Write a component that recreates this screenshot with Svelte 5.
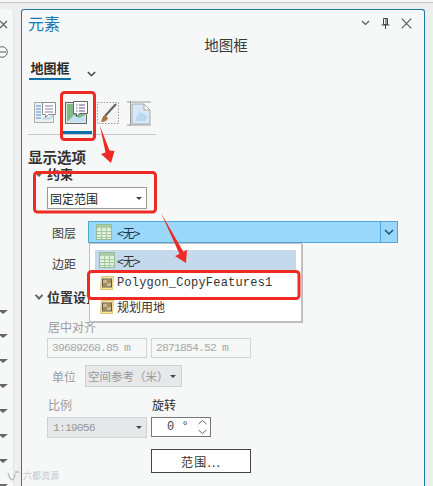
<script>
  const railMarks = [310, 334, 359, 384, 409, 434, 459, 484];
</script>

{#snippet tableIcon()}
  <svg class="ico16" viewBox="0 0 16 16" aria-hidden="true">
    <rect x="0.5" y="0.5" width="15" height="15" fill="#e4f0dc" stroke="#93bd93"/>
    <rect x="1" y="1" width="14" height="3" fill="#a9cfa6"/>
    <path d="M1 7.5h14M1 10.5h14M1 13.5h14M5.5 1v14M10.5 1v14" stroke="#a5c9a2" fill="none"/>
  </svg>
{/snippet}

{#snippet layerIcon()}
  <svg class="ico16" viewBox="0 0 16 16" aria-hidden="true">
    <path d="M2.5 1.5h12l-1 13h-12z" fill="#f7e6a4" stroke="#e0c668"/>
    <rect x="3.5" y="4" width="9" height="8" fill="#c9b98e" stroke="#5c5c50"/>
    <path d="M4 8h4V4.500h4V8H8v3.500H4z" fill="#a8895c"/>
  </svg>
{/snippet}

<div class="page">
  <div class="topline"></div>
  <div class="body">
    <aside class="rail">
      <svg class="rail-close" viewBox="0 0 10 10" aria-hidden="true">
        <path d="M1 1l7 7M8 1l-7 7" stroke="#555" stroke-width="1.1" fill="none"/>
      </svg>
      <svg class="rail-minus" viewBox="0 0 12 12" aria-hidden="true">
        <circle cx="5" cy="6" r="5.3" stroke="#666" fill="none"/>
        <path d="M1 6h8" stroke="#555" fill="none"/>
      </svg>
    </aside>

    <section class="panel">
      <header class="head">
        <h1>元素</h1>
        <div class="win-actions">
          <svg width="9" height="6" viewBox="0 0 9 6" aria-hidden="true"><path d="M1 1l3.500 3.500L8 1" stroke="#555" stroke-width="1.2" fill="none"/></svg>
          <svg width="9" height="11" viewBox="0 0 9 11" aria-hidden="true"><path d="M2.500.5h4v6h-4zM.5 7h8M4.500 7v4M5 1v5" stroke="#444" fill="none"/></svg>
          <svg width="11" height="11" viewBox="0 0 11 11" aria-hidden="true"><path d="M.7.7l9.600 9.600M10.300.7L.7 10.300" stroke="#555" stroke-width="1.1" fill="none"/></svg>
        </div>
      </header>
      <div class="caption">地图框</div>

      <div class="tab-row">
        <span class="tab">地图框</span>
        <svg width="9" height="6" viewBox="0 0 9 6" aria-hidden="true"><path d="M.8 1l3.700 3.700L8.200 1" stroke="#333" stroke-width="1.3" fill="none"/></svg>
      </div>

      <div class="tools">
        <button class="tool" aria-label="常规">
          <svg width="22" height="23" viewBox="0 0 22 23" aria-hidden="true">
            <rect x="0.5" y="1.500" width="19" height="20" fill="#eef1f3" stroke="#aaa"/>
            <path d="M2 5h5M2 8h5M2 11h5M2 14h5M2 17h5" stroke="#7fb2dd" stroke-width="1.4"/>
            <path d="M8 17.500l8 0 3-3" fill="none" stroke="#bcd6ea" stroke-width="2"/>
            <path d="M8.500 1.500h13v12h-7l-3 3v-3h-3z" fill="#fff" stroke="#8d8d8d"/>
            <path d="M11 5h8M11 8h8M11 11h8" stroke="#8a7ca8"/>
          </svg>
        </button>
        <button class="tool active" aria-label="显示选项">
          <svg width="23" height="23" viewBox="0 0 23 23" aria-hidden="true">
            <rect x="0.5" y="1.500" width="21" height="21" fill="#dfe8e0" stroke="#666"/>
            <rect x="2" y="3" width="18" height="18" fill="#7fb98a"/>
            <path d="M2 21l7-7 5 3 6-3v7z" fill="#c4dff0"/>
            <path d="M8.500 .5h14v12h-8l-3 3v-3h-3z" fill="#fff" stroke="#666"/>
            <path d="M11 4h1.500M14 4h6M11 7h1.500M14 7h6M11 10h1.500M14 10h6" stroke="#65528a"/>
          </svg>
        </button>
        <button class="tool" aria-label="符号">
          <svg width="22" height="23" viewBox="0 0 22 23" aria-hidden="true">
            <rect x="0.5" y="1.500" width="21" height="21" fill="#f4f4f4" stroke="#999" stroke-dasharray="1.5 1.5"/>
            <path d="M19 3L8 15" stroke="#666" stroke-width="2.2"/>
            <path d="M8 14l3 3c-1 3-4 4-7 4 1-2 1-6 4-7z" fill="#a8763f"/>
          </svg>
        </button>
        <button class="tool" aria-label="范围">
          <svg width="24" height="25" viewBox="0 0 24 25" aria-hidden="true">
            <path d="M3.500 0v25M0 24h24M0 1h24" stroke="#999" fill="none"/>
            <path d="M5 3h12l6 6v14H5z" fill="#d7e8f6" stroke="#aaa"/>
            <path d="M17 3v6h6z" fill="#fff" stroke="#aaa"/>
            <path d="M9 16l4-5 4 2 4 3-3 4H9z" fill="#b8d8f2"/>
          </svg>
        </button>
      </div>

      <h2 class="section">显示选项</h2>

      <div class="group"><i class="caret"></i>约束</div>
      <div class="fixed-select">
        <span>固定范围</span>
        <i class="drop"></i>
      </div>

      <div class="layer-row">
        <span class="label">图层</span>
        <div class="combo">
          <div class="combo-value">
            {@render tableIcon()}
            <span class="none">&lt;无&gt;</span>
          </div>
          <div class="combo-btn">
            <svg width="10" height="7" viewBox="0 0 10 7" aria-hidden="true"><path d="M1 1l4 4 4-4" stroke="#1d4c6e" stroke-width="1.5" fill="none"/></svg>
          </div>

          <ul class="menu">
            <li class="selected">{@render tableIcon()}<span class="none">&lt;无&gt;</span></li>
            <li class="mono">{@render layerIcon()}<span>Polygon_CopyFeatures1</span></li>
            <li>{@render layerIcon()}<span>规划用地</span></li>
          </ul>
        </div>
      </div>

      <div class="margin-row"><span class="label">边距</span></div>

      <div class="group position"><i class="caret"></i>位置设置</div>

      <div class="muted center-label">居中对齐</div>
      <div class="coords">
        <div class="coord">39689268.85 m</div>
        <div class="coord">2871854.52 m</div>
      </div>

      <div class="unit-row">
        <span class="muted label">单位</span>
        <div class="unit-select">
          <span>空间参考（米）</span>
          <i class="drop"></i>
        </div>
      </div>

      <div class="scale-labels">
        <span class="muted">比例</span>
        <span>旋转</span>
      </div>
      <div class="scale-row">
        <div class="scale-select">
          <span>1:19056</span>
          <i class="drop"></i>
        </div>
        <div class="spin">
          <span>0 °</span>
          <svg width="11" height="16" viewBox="0 0 11 16" aria-hidden="true">
            <path d="M1.500 5L5.500 1.500 9.500 5M1.500 11L5.500 14.500 9.500 11" stroke="#666" fill="none"/>
          </svg>
        </div>
      </div>

      <button class="extent">范围...</button>
    </section>
  </div>

  {#each railMarks as y}
    <i class="rail-mark" style="top: {y}px"></i>
  {/each}

  <!-- annotations drawn on top of the screenshot -->
  <svg class="notes" viewBox="0 0 433 486" aria-hidden="true">
    <g fill="none" stroke="#ee2a22" stroke-width="3">
      <rect x="61.500" y="92.500" width="33" height="47" rx="3"/>
      <rect x="34.500" y="172.500" width="121" height="39.500" rx="3"/>
      <rect x="88.500" y="271.500" width="210.500" height="27" rx="3"/>
    </g>
    <path d="M100 126L109.500 150.500 114.500 151 111 163 101 154 105.500 152.500z" fill="#ee2a22"/>
    <path d="M161 213L183.500 252 187 249.500 186 263 175 256 179.500 254z" fill="#ee2a22"/>
  </svg>

  <div class="watermark">
    <svg width="14" height="12" viewBox="0 0 14 12" aria-hidden="true">
      <path d="M2 3c1 4 2 6 4 7 2-1 3-3 3-6M9 2h4" fill="none" stroke="#b9bbbc" stroke-width="1.3"/>
    </svg>
    <span>六都资源</span>
  </div>
</div>

<style>
  :global(body) {
    margin: 0;
    background: #eceeef;
  }

  .page {
    position: relative;
    width: 433px;
    height: 486px;
    overflow: hidden;
    font-family: "Noto Sans CJK SC", "Liberation Sans", sans-serif;
    color: #2c2c2c;
    font-size: 12px;
  }

  .topline {
    height: 2px;
    background: #f8f8f8;
    border-bottom: 1px solid #c6c6c6;
  }

  .body {
    display: flex;
    height: 483px;
    padding-top: 6px;
    box-sizing: border-box;
  }

  .rail {
    position: relative;
    width: 14px;
    margin-right: 7px;
    flex: none;
    background: #f6f8f8;
    border-top-right-radius: 3px;
    border-right: 1px solid #e2e4e5;
    box-sizing: border-box;
  }
  .rail-close {
    position: absolute;
    left: -1px;
    top: 11px;
    width: 10px;
    height: 10px;
  }
  .rail-minus {
    position: absolute;
    left: -3px;
    top: 37px;
    width: 12px;
    height: 12px;
  }
  .rail-mark {
    position: absolute;
    left: -2px;
    width: 0;
    height: 0;
    border-left: 5px solid transparent;
    border-right: 5px solid transparent;
    border-top: 4px solid #666;
  }

  .panel {
    width: 404px;
    flex: none;
    box-sizing: border-box;
    background: #f6f8f8;
    border: 1px solid #1c7a9e;
    border-bottom: 0;
    border-radius: 3px 3px 0 0;
  }

  .head {
    height: 26px;
    display: flex;
    align-items: center;
    justify-content: space-between;
    padding: 0 12px 0 6px;
  }
  .head h1 {
    margin: 0;
    font-size: 16px;
    font-weight: 400;
    color: #1a78b4;
  }
  .win-actions {
    display: flex;
    align-items: center;
    gap: 11px;
  }

  .caption {
    height: 18px;
    line-height: 18px;
    padding-left: 6px;
    text-align: center;
    font-size: 14.500px;
    color: #3a3a3a;
  }

  .tab-row {
    height: 20px;
    margin-top: 6px;
    margin-left: 7px;
    display: flex;
    align-items: flex-start;
    gap: 16px;
  }
  .tab-row svg {
    margin-top: 11px;
  }
  .tab {
    height: 18px;
    width: 42px;
    line-height: 15px;
    font-size: 13px;
    font-weight: 700;
    text-align: center;
    border-bottom: 2px solid #0f70aa;
  }

  .tools {
    width: 128px;
    height: 55px;
    margin-left: 6px;
    padding: 21px 0 0 1.5px;
    box-sizing: border-box;
    display: flex;
    gap: 1.5px;
    border-bottom: 1px solid #c6c8c9;
  }
  .tool {
    position: relative;
    width: 30px;
    height: 33px;
    padding: 0;
    background: none;
    border: 0;
    display: flex;
    justify-content: center;
    align-items: flex-start;
  }
  .tool.active::after {
    content: "";
    position: absolute;
    left: 2px;
    right: -1px;
    top: 30px;
    height: 3px;
    background: #0f6fab;
  }

  .section {
    margin: 13px 0 0 6px;
    height: 18px;
    line-height: 18px;
    font-size: 14.500px;
    font-weight: 700;
    color: #333;
  }

  .group {
    height: 16px;
    line-height: 16px;
    margin-left: 14px;
    display: flex;
    align-items: center;
    gap: 5px;
    font-size: 13px;
    font-weight: 700;
    color: #333;
  }
  .caret {
    width: 6px;
    height: 6px;
    flex: none;
    box-sizing: border-box;
    border-right: 2px solid #666;
    border-bottom: 2px solid #666;
    transform: rotate(45deg) translate(-1px, -1px);
  }
  .position {
    height: 18px;
    margin-top: 15px;
  }

  .drop {
    width: 0;
    height: 0;
    flex: none;
    border-left: 3px solid transparent;
    border-right: 3px solid transparent;
    border-top: 3.5px solid #444;
  }

  .fixed-select {
    width: 100px;
    height: 22px;
    margin: 5px 0 0 25px;
    padding: 0 4px 0 2px;
    box-sizing: border-box;
    display: flex;
    align-items: center;
    justify-content: space-between;
    background: #fff;
    border: 1px solid #9a9a9a;
    font-size: 12px;
    color: #222;
  }

  .label {
    font-size: 12px;
    color: #3c3c3c;
  }

  .layer-row {
    height: 22px;
    margin: 12px 0 0 30px;
    display: flex;
    align-items: center;
    gap: 12px;
  }
  .combo {
    position: relative;
    width: 310px;
    height: 22px;
    box-sizing: border-box;
    display: flex;
    background: #99d8fb;
    border: 1px solid #4fa6d3;
  }
  .combo-value {
    flex: 1;
    display: flex;
    align-items: center;
    gap: 5px;
    padding-left: 7px;
    font-size: 12px;
    color: #234;
  }
  .combo-btn {
    width: 16px;
    display: flex;
    align-items: center;
    justify-content: center;
    border-left: 1px solid #4fa6d3;
  }
  .none {
    letter-spacing: -1px;
  }
  .ico16 {
    width: 16px;
    height: 16px;
    flex: none;
  }

  .menu {
    position: absolute;
    left: 0;
    top: 21px;
    width: 213px;
    height: 79px;
    margin: 0;
    padding: 6px 5px 0;
    box-sizing: border-box;
    list-style: none;
    background: #fff;
    border: 1px solid #c0c0c0;
    box-shadow: 1px 1px 0 #bdbdbd;
    font-size: 12px;
    color: #333;
  }
  .menu li {
    height: 21px;
    display: flex;
    align-items: center;
    gap: 2px;
    padding-left: 4px;
  }
  .menu .selected {
    height: 20px;
    background: #c5d9ec;
  }
  .menu .mono {
    height: 26px;
    font-family: "Liberation Mono", monospace;
    font-size: 12px;
    letter-spacing: 0.2px;
  }

  .margin-row {
    height: 20px;
    margin: 10px 0 0 30px;
    display: flex;
    align-items: center;
  }

  .muted {
    color: #9b9b9b;
  }
  .center-label {
    height: 16px;
    line-height: 16px;
    margin: 13px 0 0 26px;
    font-size: 12px;
  }

  .coords {
    height: 20px;
    margin: 3px 0 0 25px;
    display: flex;
    gap: 4px;
  }
  .coord {
    width: 100px;
    box-sizing: border-box;
    padding-left: 4px;
    line-height: 18px;
    border: 1px solid #d2d4d4;
    font-family: "Liberation Mono", monospace;
    font-size: 11.500px;
    letter-spacing: -0.9px;
    color: #a8a8a8;
  }

  .unit-row {
    height: 22px;
    margin: 7px 0 0 30px;
    display: flex;
    align-items: center;
    gap: 9px;
  }
  .unit-select {
    width: 97px;
    height: 22px;
    box-sizing: border-box;
    padding: 0 5px 0 2px;
    display: flex;
    align-items: center;
    justify-content: space-between;
    background: #e6e8e9;
    border: 1px solid #cfd1d2;
    font-size: 11.500px;
    color: #999;
    white-space: nowrap;
    overflow: hidden;
  }

  .scale-labels {
    height: 16px;
    line-height: 16px;
    margin: 10px 0 0 26px;
    display: flex;
    gap: 80px;
    font-size: 12px;
  }

  .scale-row {
    height: 21px;
    margin: 4px 0 0 25px;
    display: flex;
    gap: 4px;
  }
  .scale-select {
    width: 100px;
    box-sizing: border-box;
    padding: 0 4px 0 5px;
    display: flex;
    align-items: center;
    justify-content: space-between;
    background: #e6e8e9;
    border: 1px solid #cfd1d2;
    font-family: "Liberation Mono", monospace;
    font-size: 11.500px;
    letter-spacing: -0.95px;
    color: #999;
  }
  .spin {
    width: 60px;
    height: 20px;
    box-sizing: border-box;
    padding: 0 2px 0 15px;
    display: flex;
    align-items: center;
    justify-content: space-between;
    background: #fff;
    border: 1px solid #777;
    font-family: "Liberation Mono", monospace;
    font-size: 12px;
    color: #444;
  }

  .extent {
    display: block;
    width: 100px;
    height: 24px;
    margin: 11px 0 0 129px;
    padding: 0;
    background: #fff;
    border: 1px solid #444;
    border-radius: 0;
    font-family: "Noto Sans CJK SC", "Liberation Sans", sans-serif;
    font-size: 12px;
    letter-spacing: 1.2px;
    color: #333;
  }

  .notes {
    position: absolute;
    inset: 0;
    width: 433px;
    height: 486px;
    pointer-events: none;
  }

  .watermark {
    position: absolute;
    left: 6px;
    top: 469px;
    display: flex;
    align-items: center;
    gap: 3px;
    font-size: 9px;
    line-height: 13px;
    color: #c4c6c7;
  }
</style>
